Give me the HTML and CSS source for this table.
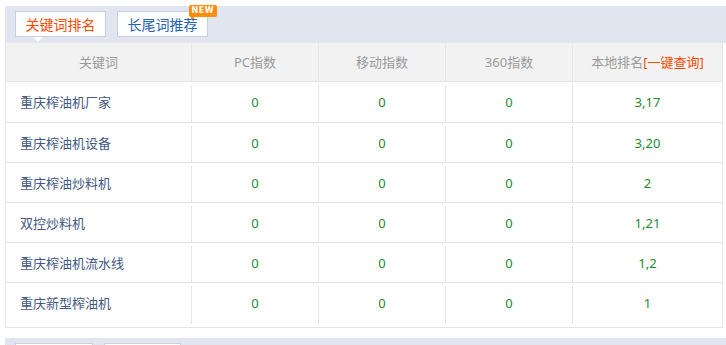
FILE: index.html
```html
<!DOCTYPE html>
<html lang="zh-CN">
<head>
<meta charset="utf-8">
<title>关键词排名</title>
<link rel="stylesheet" href="styles.css">
</head>
<body>
<div class="wrap">
  <div class="tabbar">
    <div class="tab active">关键词排名<span class="notch"></span></div>
    <div class="tab">长尾词推荐<span class="badge">NEW</span></div>
  </div>
  <div class="table">
    <div class="row head">
      <div class="cell kw">关键词</div>
      <div class="cell">PC指数</div>
      <div class="cell">移动指数</div>
      <div class="cell">360指数</div>
      <div class="cell last">本地排名<span class="query">[一键查询]</span></div>
    </div>
    <div class="row first">
      <div class="cell kw">重庆榨油机厂家</div>
      <div class="cell">0</div><div class="cell">0</div><div class="cell">0</div>
      <div class="cell last">3,17</div>
    </div>
    <div class="row">
      <div class="cell kw">重庆榨油机设备</div>
      <div class="cell">0</div><div class="cell">0</div><div class="cell">0</div>
      <div class="cell last">3,20</div>
    </div>
    <div class="row">
      <div class="cell kw">重庆榨油炒料机</div>
      <div class="cell">0</div><div class="cell">0</div><div class="cell">0</div>
      <div class="cell last">2</div>
    </div>
    <div class="row">
      <div class="cell kw">双控炒料机</div>
      <div class="cell">0</div><div class="cell">0</div><div class="cell">0</div>
      <div class="cell last">1,21</div>
    </div>
    <div class="row">
      <div class="cell kw">重庆榨油机流水线</div>
      <div class="cell">0</div><div class="cell">0</div><div class="cell">0</div>
      <div class="cell last">1,2</div>
    </div>
    <div class="row final">
      <div class="cell kw">重庆新型榨油机</div>
      <div class="cell">0</div><div class="cell">0</div><div class="cell">0</div>
      <div class="cell last">1</div>
    </div>
  </div>
  <div class="tabbar lower">
    <div class="tab small"></div>
    <div class="tab small"></div>
  </div>
</div>
</body>
</html>
```
FILE: styles.css
```css
* { box-sizing: border-box; }
html, body { margin: 0; padding: 0; background: #fff; overflow: hidden; }
body {
  font-family: "Noto Sans", "Noto Sans CJK SC", sans-serif;
  font-size: 13px;
  color: #333;
}
.wrap {
  margin-left: 5px;
  width: 721px;
  padding-top: 6px;
}
.tabbar {
  height: 37px;
  background: #e1e5f0;
  padding: 5px 0 0 10px;
  display: flex;
  gap: 11px;
}
.tab {
  position: relative;
  width: 91px;
  height: 26px;
  background: #fff;
  border: 1px solid #c9cfdf;
  font-size: 14px;
  line-height: 24px;
  text-align: center;
  color: #2563b0;
  font-family: "Noto Sans CJK SC", sans-serif;
}
.tab.active { color: #ff4a00; }
.notch {
  position: absolute;
  left: 17px;
  bottom: -6px;
  width: 0;
  height: 0;
  border-left: 5px solid transparent;
  border-right: 5px solid transparent;
  border-top: 5px solid #fff;
}
.badge {
  position: absolute;
  top: -7px;
  right: -10px;
  height: 12px;
  padding: 0 3px;
  background: #ff8c0a;
  border-radius: 2px;
  color: #fff;
  font-family: "DejaVu Sans", sans-serif;
  font-weight: bold;
  font-size: 8px;
  line-height: 12px;
  letter-spacing: 0.5px;
}
.badge::after {
  content: "";
  position: absolute;
  left: 2px;
  bottom: -3px;
  border-right: 4px solid transparent;
  border-top: 3px solid #ff8c0a;
}
.table {
  width: 718px;
  border-left: 1px solid #e6e6e6;
  border-right: 1px solid #e6e6e6;
  border-bottom: 1px solid #e4e4e4;
  padding-bottom: 3px;
}
.row {
  display: grid;
  grid-template-columns: 185px 127px 127px 127px 1fr;
  border-bottom: 1px solid #e4e4e4;
  padding-top: 3px;
  height: 40px;
}
.row.first { height: 41px; }
.row.final { border-bottom: none; height: 41px; }
.row.head {
  background: #f2f2f2;
  padding-top: 0;
  height: 39px;
  border-bottom: 1px solid #e4e4e4;
}
.cell {
  border-left: 1px solid #e6e6e6;
  text-align: center;
  line-height: 34px;
  color: #1d8a2f;
}
.row.head .cell {
  line-height: 38px;
  color: #9a9a9a;
  font-size: 13px;
}
.cell.kw {
  border-left: none;
  text-align: left;
  padding-left: 14px;
  color: #44597f;
  font-family: "Noto Sans CJK SC", sans-serif;
}
.row.head .cell.kw { text-align: center; padding-left: 0; }
.query { color: #ff4a00; }
.tabbar.lower { margin-top: 10px; }
.tab.small { width: 78px; }
.tab.small + .tab.small { width: 77px; }
```
